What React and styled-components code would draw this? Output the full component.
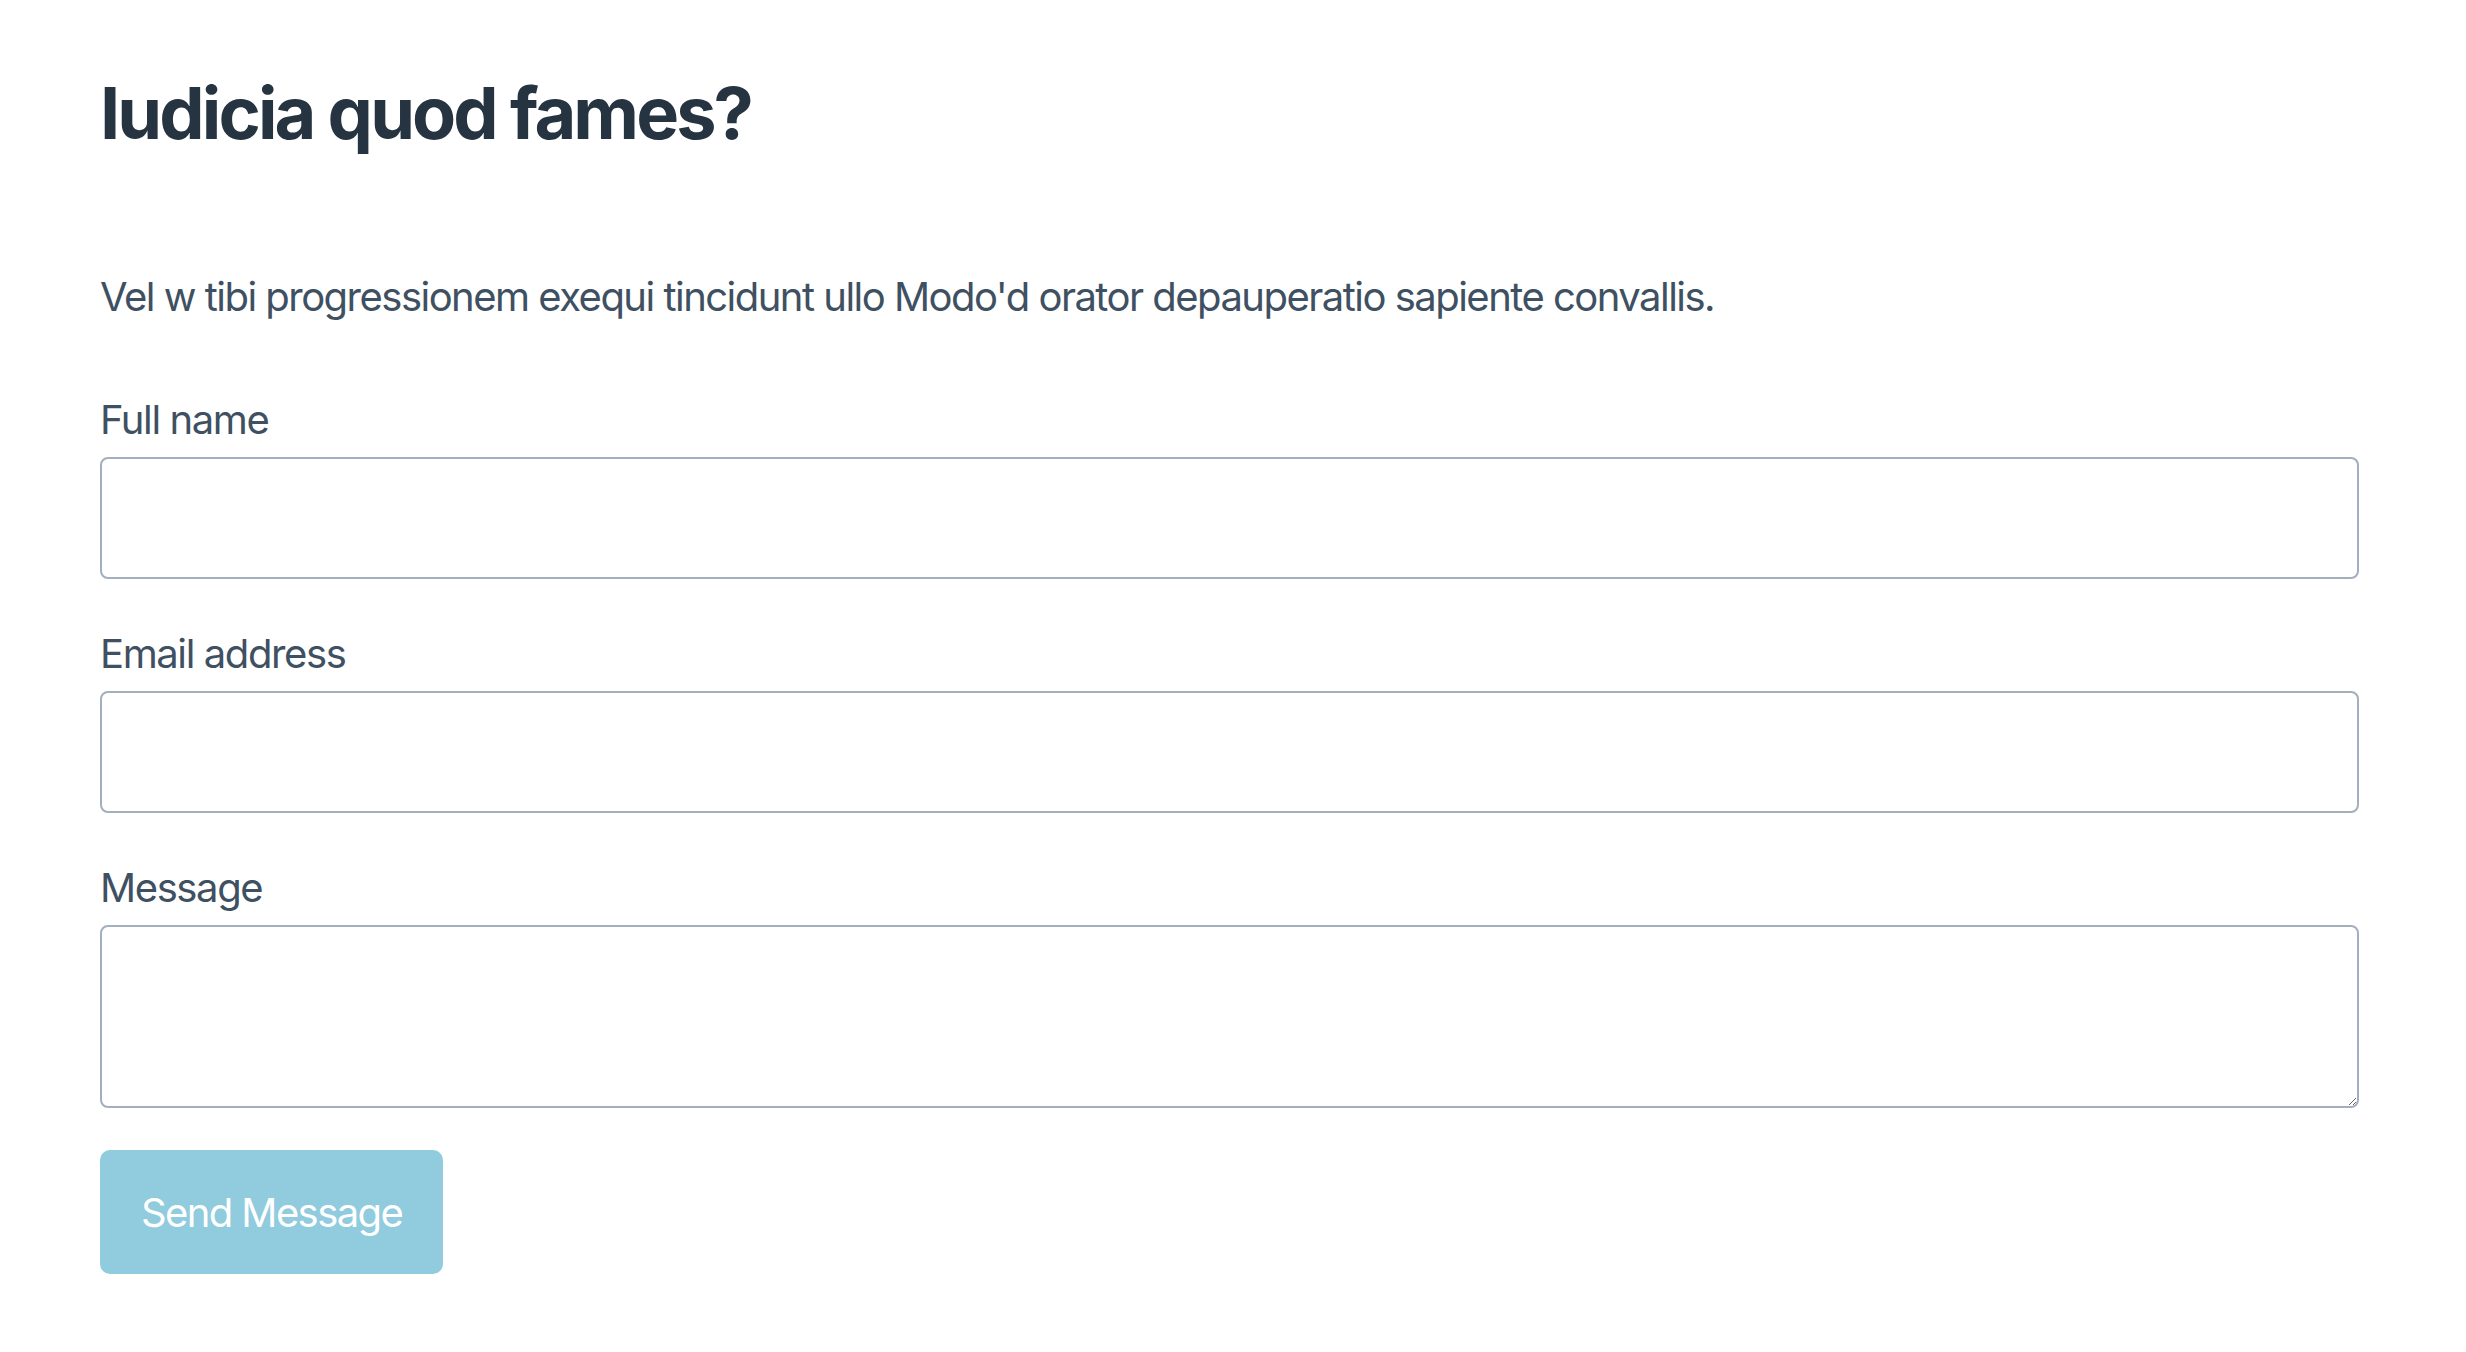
import styled, { createGlobalStyle } from "styled-components";

const GlobalStyle = createGlobalStyle`
  * { box-sizing: border-box; }
  body {
    margin: 0;
    background: #ffffff;
    font-family: Inter, "Liberation Sans", sans-serif;
  }
`;

const Page = styled.div`
  padding: 68px 107px 60px 100px;
`;

const Title = styled.h1`
  margin: 0 0 111px;
  font-size: 72px;
  line-height: 90px;
  font-weight: 700;
  letter-spacing: -0.04em;
  color: #263340;
`;

const Intro = styled.p`
  margin: 0 0 67px;
  font-size: 40px;
  line-height: 56px;
  letter-spacing: -0.038em;
  color: #3e5061;
`;

const Form = styled.form`
  display: flex;
  flex-direction: column;
`;

const Field = styled.div`
  display: flex;
  flex-direction: column;
  margin-bottom: ${(p) => p.$mb || 47}px;
`;

const Label = styled.label`
  margin-bottom: 9px;
  font-size: 40px;
  line-height: 56px;
  letter-spacing: -0.035em;
  color: #3e5061;
`;

const Input = styled.input`
  height: 122px;
  padding: 0 28px;
  border: 2px solid #a3afbd;
  border-radius: 8px;
  font: inherit;
  font-size: 40px;
  color: #263340;
  outline: none;
`;

const TextArea = styled.textarea`
  height: 183px;
  padding: 20px 28px;
  border: 2px solid #a3afbd;
  border-radius: 8px;
  font: inherit;
  font-size: 40px;
  color: #263340;
  outline: none;
  display: block;
`;

const SubmitButton = styled.button`
  align-self: flex-start;
  height: 124px;
  padding: 0 41px;
  border: none;
  border-radius: 10px;
  background: #90cbde;
  color: #ffffff;
  font: inherit;
  font-size: 40px;
  letter-spacing: -0.04em;
  cursor: pointer;
`;

const App = () => {
  return (
    <Page>
      <GlobalStyle />
      <Title>Iudicia quod fames?</Title>
      <Intro>
        Vel w tibi progressionem exequi tincidunt ullo Modo'd orator depauperatio sapiente convallis.
      </Intro>
      <Form onSubmit={(e) => e.preventDefault()}>
        <Field>
          <Label htmlFor="name">Full name</Label>
          <Input id="name" type="text" />
        </Field>
        <Field>
          <Label htmlFor="email">Email address</Label>
          <Input id="email" type="email" />
        </Field>
        <Field $mb={42}>
          <Label htmlFor="message">Message</Label>
          <TextArea id="message" />
        </Field>
        <SubmitButton type="submit" disabled>
          Send Message
        </SubmitButton>
      </Form>
    </Page>
  );
};

export default App;
